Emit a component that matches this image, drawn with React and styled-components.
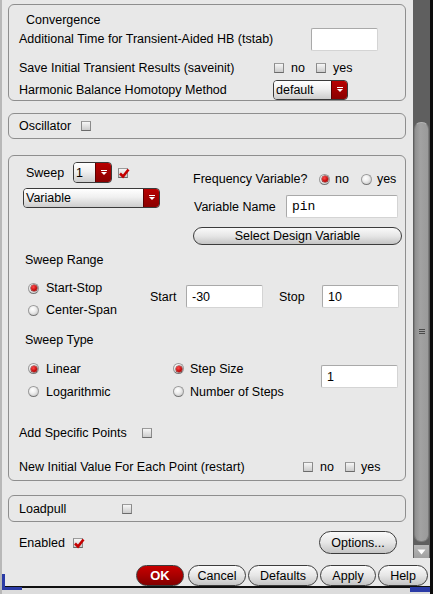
import React from "react"
import styled, {createGlobalStyle} from "styled-components"

const GlobalStyle = createGlobalStyle`
  html, body {
    margin: 0;
    padding: 0;
    background: #e8e8e8;
  }
  body {
    font-family: "Liberation Sans", Arial, sans-serif;
    font-size: 12.5px;
    color: #000;
  }
  * {
    box-sizing: border-box;
  }
`

const Window = styled.div`
  position: relative;
  width: 433px;
  height: 594px;
  display: flex;
  flex-direction: column;
  background: #e8e8e8;
  border-left: 2px solid #b8b8b8;
  border-right: 3px solid #0c0c0c;
  overflow: hidden;
`

const Main = styled.div`
  display: flex;
  height: 559px;
`

const Pane = styled.div`
  flex: 1;
  padding: 4px 7px 0 6px;
  display: flex;
  flex-direction: column;
`

const GroupBox = styled.div`
  border: 1px solid #8e8e8e;
  border-radius: 6px;
  margin-top: ${p => p.$gap || 0}px;
  padding: ${p => p.$pad || "0"};
`

const Row = styled.div`
  display: flex;
  align-items: center;
  height: ${p => p.$h || 16}px;
  padding-left: ${p => p.$indent ?? 10}px;
  margin-top: ${p => p.$mt || 0}px;
  padding-top: ${p => p.$pt || 0}px;
`

const Label = styled.span`
  display: inline-block;
  width: ${p => (p.$w ? `${p.$w}px` : "auto")};
  flex-shrink: 0;
  white-space: nowrap;
  line-height: 14px;
  margin-left: ${p => p.$ml || 0}px;
`

const Title = styled.div`
  height: 14px;
  line-height: 14px;
  padding-left: ${p => p.$indent || 16}px;
  margin-top: ${p => p.$mt || 0}px;
`

const TextInput = styled.div`
  width: ${p => p.$w}px;
  height: 23px;
  flex-shrink: 0;
  background: #fff;
  border: 1px solid #a9a9a9;
  border-bottom-color: #d4d4d4;
  border-right-color: #d4d4d4;
  border-radius: 2px;
  padding-left: 5px;
  display: flex;
  align-items: center;
  font-family: ${p => (p.$mono ? '"Liberation Mono", "Courier New", monospace' : "inherit")};
  font-size: ${p => (p.$mono ? "13px" : "inherit")};
  margin-top: ${p => p.$mt || 0}px;
  margin-left: ${p => p.$ml || 0}px;
`

const Box = styled.span`
  display: inline-flex;
  align-items: center;
  justify-content: center;
  width: 10px;
  height: 10px;
  flex-shrink: 0;
  border: 1px solid #8a8a8a;
  border-top-color: #9c9c9c;
  border-bottom-color: #6a6a6a;
  background: linear-gradient(#f6f6f6, #cccccc);
  position: relative;
  margin-right: ${p => p.$mr || 0}px;
  margin-left: ${p => p.$ml || 0}px;
`

const Tick = styled.svg`
  position: absolute;
  left: -1px;
  top: -2px;
`

function Checkbox({checked, mr, ml}) {
  return (
    <Box $mr={mr} $ml={ml}>
      {checked && (
        <Tick width="12" height="12" viewBox="0 0 12 12">
          <path d="M2 6.5 L5 9.5 L10.5 2.5" fill="none" stroke="#c40000" strokeWidth="2.6" />
        </Tick>
      )}
    </Box>
  )
}

const Circle = styled.span`
  display: inline-flex;
  align-items: center;
  justify-content: center;
  width: 11px;
  height: 11px;
  flex-shrink: 0;
  border-radius: 50%;
  border: 1px solid #9a9a9a;
  border-bottom-color: #777;
  background: radial-gradient(circle at 40% 35%, #ffffff 0%, #eeeeee 40%, #bdbdbd 100%);
  margin-right: ${p => p.$mr || 0}px;
  margin-left: ${p => p.$ml || 0}px;

  &::after {
    content: "";
    display: ${p => (p.$on ? "block" : "none")};
    width: 6px;
    height: 6px;
    border-radius: 50%;
    background: radial-gradient(circle at 40% 35%, #ff4a4a, #b80000 70%);
    box-shadow: 0 0 0 0.5px #700000;
  }
`

const Pick = styled.span`
  display: inline-flex;
  align-items: center;
`

function Radio({on, children, gap = 7, ml}) {
  return (
    <Pick>
      <Circle $on={on} $mr={gap} $ml={ml} />
      <Label>{children}</Label>
    </Pick>
  )
}

const Drop = styled.div`
  display: flex;
  width: ${p => p.$w}px;
  height: ${p => p.$h || 20}px;
  flex-shrink: 0;
  border: 1px solid #3a3a3a;
  border-radius: 4px;
  overflow: hidden;
  margin-left: ${p => p.$ml || 0}px;
  margin-top: ${p => p.$mt || 0}px;
`

const DropText = styled.div`
  flex: 1;
  display: flex;
  align-items: center;
  padding-left: 2px;
  background: linear-gradient(#ffffff 0%, #f0f0f0 45%, #cdcdcd 100%);
`

const DropArrow = styled.div`
  width: 16px;
  display: flex;
  align-items: center;
  justify-content: center;
  background: linear-gradient(#b80000, #8a0000);
  border-left: 1px solid #5a0000;
`

function Dropdown({w, h, value, ml, mt}) {
  return (
    <Drop $w={w} $h={h} $ml={ml} $mt={mt}>
      <DropText>{value}</DropText>
      <DropArrow>
        <svg width="8" height="6" viewBox="0 0 8 6">
          <path d="M1 0.5 H7" stroke="#fff" strokeWidth="1" />
          <path d="M1 2 H7 L4 5 Z" fill="#fff" />
        </svg>
      </DropArrow>
    </Drop>
  )
}

const Button = styled.div`
  display: flex;
  align-items: center;
  justify-content: center;
  width: ${p => (p.$w ? `${p.$w}px` : "auto")};
  height: ${p => p.$h || 21}px;
  flex-shrink: 0;
  border: 1px solid #3c3c3c;
  border-radius: ${p => (p.$h ? p.$h / 2 : 11)}px;
  background: ${p =>
    p.$primary
      ? "linear-gradient(#c80000 0%, #a80000 50%, #820000 100%)"
      : "linear-gradient(#fafafa 0%, #e6e6e6 50%, #c4c4c4 100%)"};
  color: ${p => (p.$primary ? "#fff" : "#000")};
  font-weight: ${p => (p.$primary ? "bold" : "normal")};
  font-size: ${p => (p.$primary ? "13px" : "inherit")};
  margin-left: ${p => p.$ml || 0}px;
  margin-top: ${p => p.$mt || 0}px;
`

const Split = styled.div`
  display: flex;
  margin-top: ${p => p.$mt || 0}px;
`

const LeftCol = styled.div`
  width: ${p => p.$w}px;
  padding-left: ${p => p.$pl || 0}px;
  padding-top: ${p => p.$pt || 0}px;
  display: flex;
  flex-direction: column;
`

const RightCol = styled.div`
  flex: 1;
  padding-top: ${p => p.$pt || 0}px;
  padding-right: 3px;
  display: flex;
  flex-direction: column;
`

const RadioStack = styled.div`
  display: grid;
  grid-auto-rows: ${p => p.$row}px;
  align-items: center;
  width: ${p => p.$w}px;
  padding-left: ${p => p.$pl || 0}px;
`

const FieldPair = styled.div`
  display: flex;
  align-items: center;
  height: 23px;
  margin-top: 8px;
`

const Scrollbar = styled.div`
  width: 17px;
  display: flex;
  flex-direction: column;
  background: #5f5f5f;
  padding: 0 1px;
`

const Thumb = styled.div`
  margin-top: 122px;
  height: 420px;
  border-radius: 7px;
  background: linear-gradient(90deg, #8f8f8f, #a2a2a2 40%, #9a9a9a);
  border: 1px solid #7c7c7c;
  border-top-color: #b4b4b4;
  display: flex;
  align-items: center;
  justify-content: center;
`

const Grip = styled.div`
  width: 6px;
  height: 6px;
  background: repeating-linear-gradient(#4a4a4a 0 1px, transparent 1px 2px);
`

const ArrowBtn = styled.div`
  margin-top: 3px;
  height: 13px;
  background: linear-gradient(#b8b8b8, #a0a0a0);
  display: flex;
  align-items: center;
  justify-content: center;
`

const ScrollTail = styled.div`
  flex: 1;
  background: #e8e8e8;
  margin: 0 -1px;
`

const Footer = styled.div`
  display: flex;
  justify-content: flex-end;
  gap: 2px;
  height: 27px;
  padding: 6px 2px 0 0;
`

const FrameEdge = styled.div`
  flex: 1;
  border-top: 2px solid #101010;
  background: #dcdcdc;
`

const Corner = styled.div`
  position: absolute;
  bottom: ${p => p.$b}px;
  ${p => (p.$side === "left" ? "left: 0;" : "right: 0;")}
  width: ${p => p.$w}px;
  height: ${p => p.$h}px;
  background: #2b3ba6;
`

function App() {
  return (
    <>
      <GlobalStyle />
      <Window>
        <Main>
          <Pane>
            <GroupBox $pad="8px 0 0 0">
              <Title $indent={17}>Convergence</Title>
              <Row $h={24}>
                <Label $w={292}>Additional Time for Transient-Aided HB (tstab)</Label>
                <TextInput $w={67} />
              </Row>
              <Row $h={29} $pt={4}>
                <Label $w={255}>Save Initial Transient Results (saveinit)</Label>
                <Checkbox mr={7} />
                <Label $w={25}>no</Label>
                <Checkbox mr={7} />
                <Label>yes</Label>
              </Row>
              <Row $h={20}>
                <Label $w={254}>Harmonic Balance Homotopy Method</Label>
                <Dropdown w={75} value="default" />
              </Row>
            </GroupBox>

            <GroupBox $gap={12}>
              <Row $h={24}>
                <Label $w={62}>Oscillator</Label>
                <Checkbox />
              </Row>
            </GroupBox>

            <GroupBox $gap={16} $pad="0 0 5px 0">
              <Split>
                <LeftCol $w={184} $pl={14} $pt={6}>
                  <Row $h={21} $indent={3}>
                    <Label $w={47}>Sweep</Label>
                    <Dropdown w={39} h={21} value="1" />
                    <Checkbox ml={6} checked />
                  </Row>
                  <Dropdown w={137} value="Variable" mt={5} />
                </LeftCol>
                <RightCol $pt={15}>
                  <Row $h={16} $indent={0}>
                    <Label $w={126}>Frequency Variable?</Label>
                    <Radio on gap={5}>no</Radio>
                    <Radio gap={5} ml={12}>yes</Radio>
                  </Row>
                  <Row $h={23} $indent={1} $mt={8}>
                    <Label $w={92}>Variable Name</Label>
                    <TextInput $w={112} $mono>pin</TextInput>
                  </Row>
                  <Button $h={18} $mt={9}>Select Design Variable</Button>
                </RightCol>
              </Split>

              <Title $mt={8}>Sweep Range</Title>
              <Split $mt={10}>
                <RadioStack $row={22} $w={141} $pl={19}>
                  <Radio on>Start-Stop</Radio>
                  <Radio>Center-Span</Radio>
                </RadioStack>
                <FieldPair>
                  <Label $w={36}>Start</Label>
                  <TextInput $w={77}>-30</TextInput>
                  <Label $w={43} $ml={16}>Stop</Label>
                  <TextInput $w={77}>10</TextInput>
                </FieldPair>
              </Split>

              <Title $mt={12}>Sweep Type</Title>
              <Split $mt={10}>
                <RadioStack $row={23} $w={164} $pl={19}>
                  <Radio on>Linear</Radio>
                  <Radio>Logarithmic</Radio>
                </RadioStack>
                <RadioStack $row={23} $w={148}>
                  <Radio on gap={6}>Step Size</Radio>
                  <Radio gap={6}>Number of Steps</Radio>
                </RadioStack>
                <TextInput $w={77} $mt={8}>1</TextInput>
              </Split>

              <Row $mt={22}>
                <Label $w={123}>Add Specific Points</Label>
                <Checkbox />
              </Row>
              <Row $mt={18}>
                <Label $w={284}>New Initial Value For Each Point (restart)</Label>
                <Checkbox mr={7} />
                <Label $w={25}>no</Label>
                <Checkbox mr={6} />
                <Label>yes</Label>
              </Row>
            </GroupBox>

            <GroupBox $gap={14}>
              <Row $h={25}>
                <Label $w={103}>Loadpull</Label>
                <Checkbox />
              </Row>
            </GroupBox>

            <Row $h={23} $mt={9} $indent={11}>
              <Label $w={54}>Enabled</Label>
              <Checkbox checked />
              <Button $w={78} $h={23} style={{marginLeft: "auto", marginRight: 9}}>Options...</Button>
            </Row>
          </Pane>
          <Scrollbar>
            <Thumb>
              <Grip />
            </Thumb>
            <ArrowBtn>
              <svg width="9" height="6" viewBox="0 0 9 6">
                <path d="M0.5 0.5 H8.5 L4.5 5.5 Z" fill="#fff" />
              </svg>
            </ArrowBtn>
            <ScrollTail />
          </Scrollbar>
        </Main>
        <Footer>
          <Button $primary $w={48}>OK</Button>
          <Button $w={58} $ml={2}>Cancel</Button>
          <Button $w={70}>Defaults</Button>
          <Button $w={56}>Apply</Button>
          <Button $w={50}>Help</Button>
        </Footer>
        <FrameEdge />
        <Corner $side="left" $b={4} $w={20} $h={3} />
        <Corner $side="left" $b={4} $w={3} $h={16} />
        <Corner $side="right" $b={2} $w={20} $h={5} />
      </Window>
    </>
  )
}

export default App
